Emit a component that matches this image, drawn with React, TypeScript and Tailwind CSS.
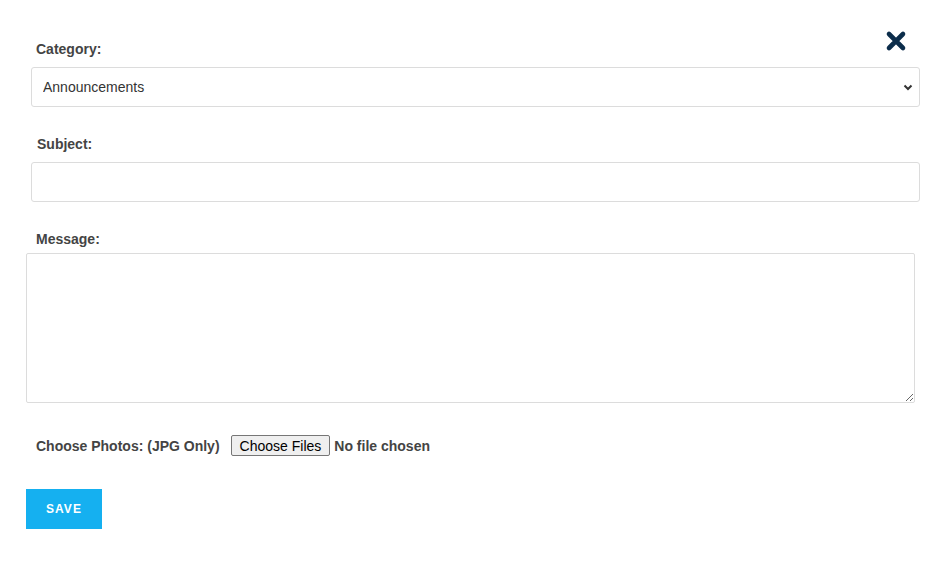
import React, { useState } from "react";

const CATEGORIES = ["Announcements", "Events", "News", "Reminders"];

function CloseIcon() {
  return (
    <svg width="22" height="22" viewBox="0 0 22 22" aria-hidden="true">
      <path d="M4 4 L18 18 M18 4 L4 18" stroke="#0c2d4b" strokeWidth="4.6" strokeLinecap="round" />
    </svg>
  );
}

function Label({ children, className = "" }: { children: React.ReactNode; className?: string }) {
  return (
    <label className={`block text-[14px] leading-[20px] font-bold text-[#444] ${className}`}>
      {children}
    </label>
  );
}

export default function App() {
  const [category, setCategory] = useState(CATEGORIES[0]);
  const [subject, setSubject] = useState("");
  const [message, setMessage] = useState("");

  return (
    <div className="relative min-h-[574px] w-full bg-white font-['Liberation_Sans',Arial,sans-serif] text-[#333]">
      {/* close button */}
      <button className="absolute left-[885px] top-[30px] flex h-[22px] w-[22px] items-center justify-center">
        <CloseIcon />
      </button>

      <form className="flex flex-col pl-[26px] pr-[13px] pt-[39px]" onSubmit={(e) => e.preventDefault()}>
        <Label className="ml-[10px]">Category:</Label>
        <div className="relative ml-[5px] mt-[8px]">
          <select
            value={category}
            onChange={(e) => setCategory(e.target.value)}
            className="h-[40px] w-full appearance-none rounded-[3px] border border-[#dcdcdc] bg-white pl-[11px] text-[14px] text-[#333] outline-none"
          >
            {CATEGORIES.map((c) => (
              <option key={c}>{c}</option>
            ))}
          </select>
          <svg
            className="pointer-events-none absolute right-[7px] top-[17px]"
            width="10"
            height="7"
            viewBox="0 0 10 7"
          >
            <path d="M1.5 1.5 L5 5 L8.5 1.5" fill="none" stroke="#333" strokeWidth="2" />
          </svg>
        </div>

        <Label className="ml-[11px] mt-[27px]">Subject:</Label>
        <input
          value={subject}
          onChange={(e) => setSubject(e.target.value)}
          className="ml-[5px] mt-[8px] h-[40px] rounded-[3px] border border-[#dcdcdc] bg-white px-[11px] text-[14px] outline-none"
        />

        <Label className="ml-[10px] mt-[27px]">Message:</Label>
        <textarea
          value={message}
          onChange={(e) => setMessage(e.target.value)}
          className="mr-[5px] mt-[4px] h-[150px] rounded-[2px] border border-[#dcdcdc] bg-white p-[8px] text-[14px] outline-none"
        />

        <div className="ml-[10px] mt-[33px] flex h-[21px] items-center">
          <span className="text-[14px] font-bold text-[#444]">Choose Photos: (JPG Only)</span>
          <input
            type="file"
            multiple
            accept=".jpg,.jpeg"
            className="relative -top-[1px] ml-[11px] text-[14px] font-bold text-[#444] file:mr-[4px] file:h-[21px] file:rounded-[2px] file:border file:border-[#767676] file:bg-[#efefef] file:px-[8px] file:font-normal file:text-black"
          />
        </div>

        <div className="mt-[32px]">
          <button
            type="submit"
            className="h-[40px] w-[76px] bg-[#15b0f0] text-[12px] font-bold tracking-[1px] text-white"
          >
            SAVE
          </button>
        </div>
      </form>
    </div>
  );
}
